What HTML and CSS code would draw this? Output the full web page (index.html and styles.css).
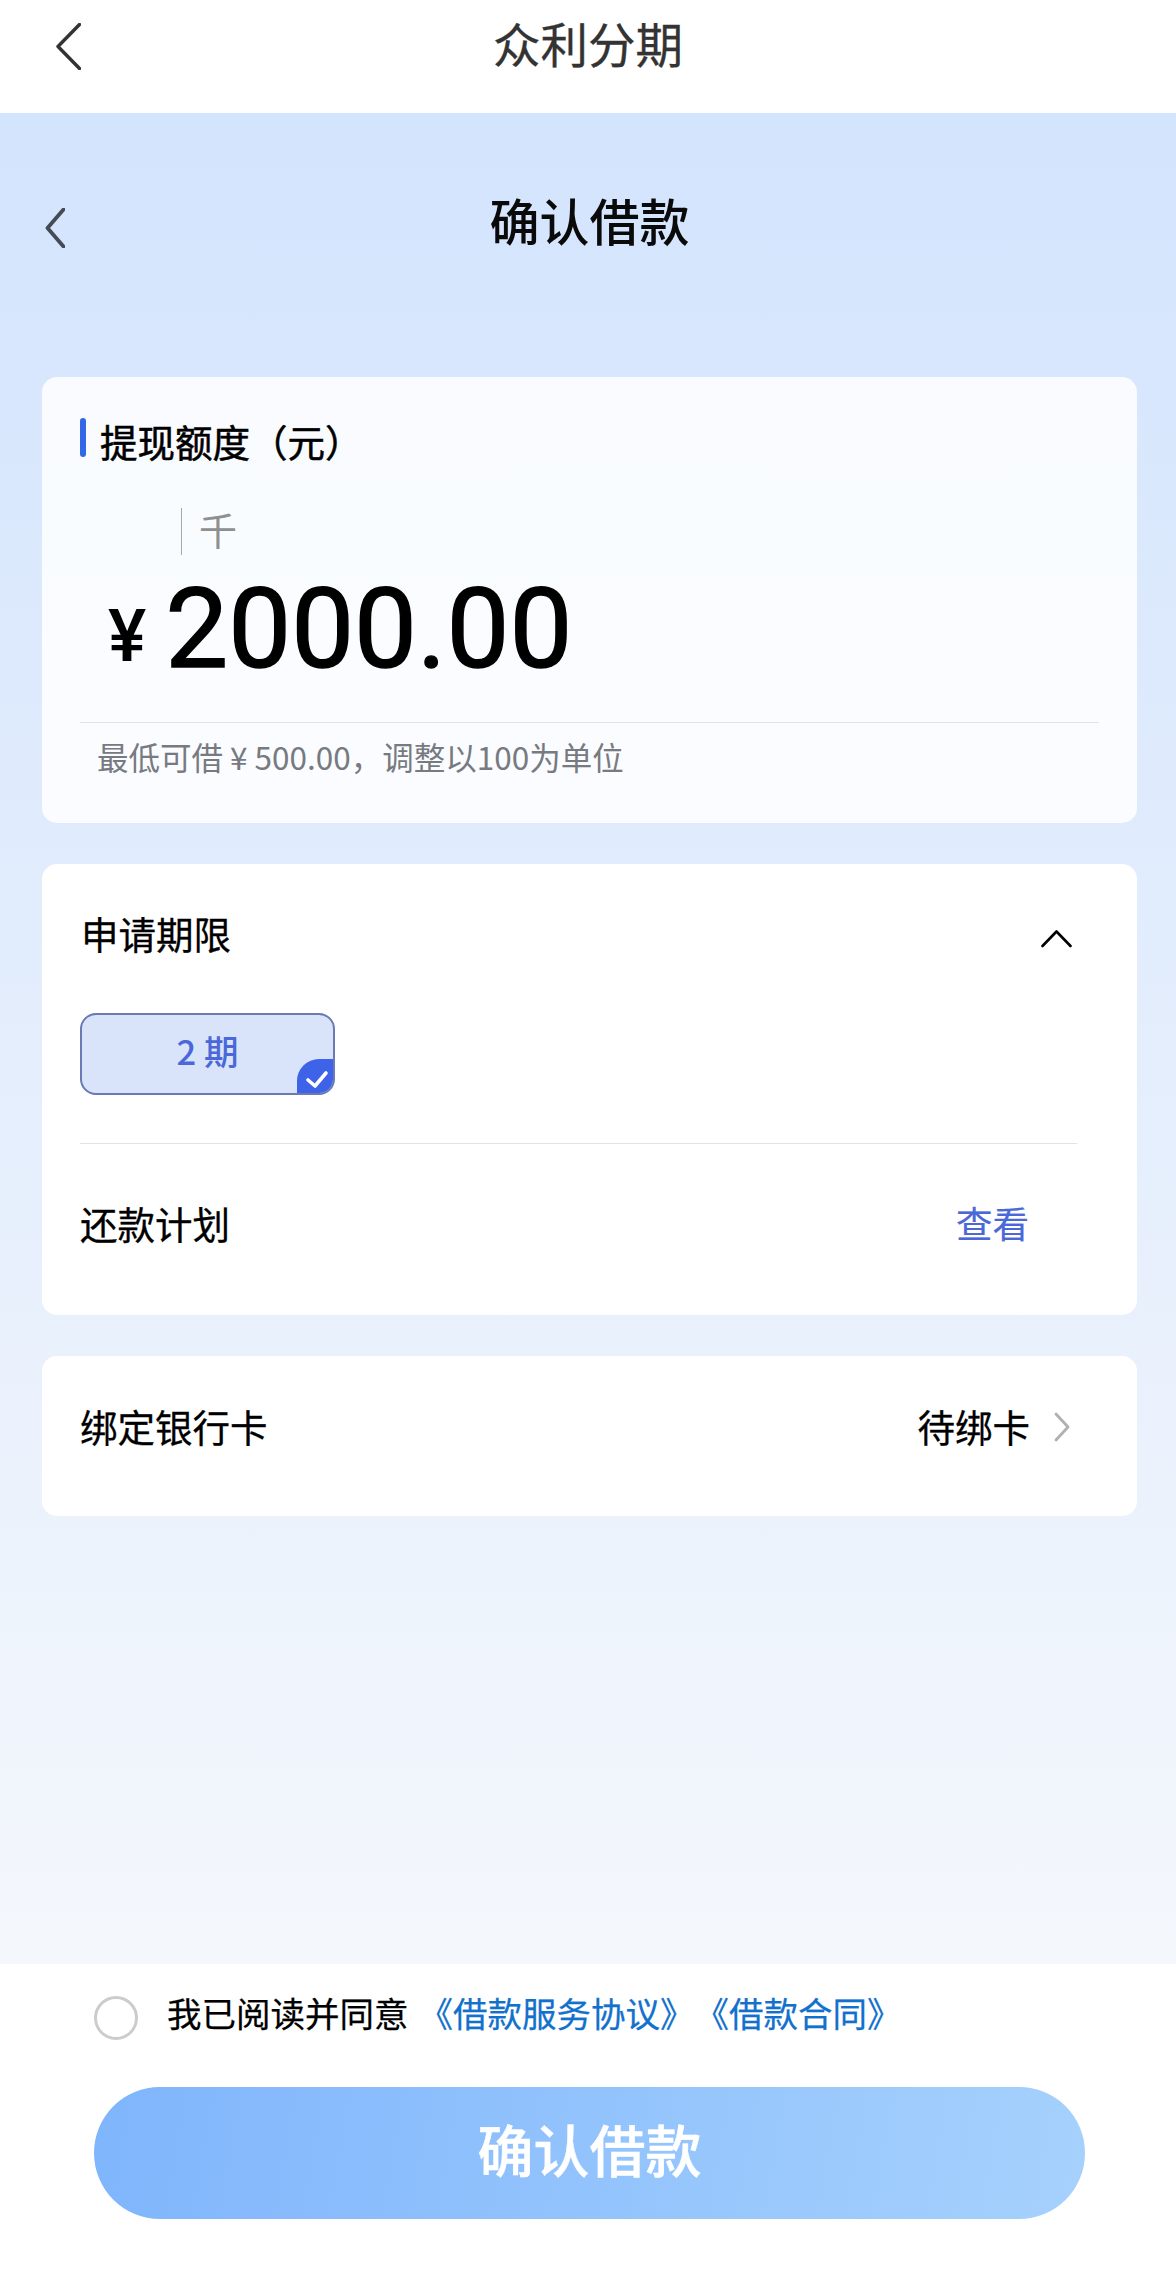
FILE: index.html
```html
<!DOCTYPE html>
<html lang="zh-CN">
<head>
<meta charset="utf-8">
<title>众利分期</title>
<link rel="stylesheet" href="styles.css">
</head>
<body>
<div class="page">
  <header class="topbar">
    <svg class="topbar-back" width="25" height="47" viewBox="0 0 25 47"><path d="M23.5 1.5 2 23.5 23.5 45.5" /></svg>
    <div class="topbar-title">众利分期</div>
    <span></span>
  </header>
  <main class="main">
    <div class="subbar">
      <svg class="subbar-back" width="20" height="40" viewBox="0 0 20 40"><path d="M18.5 1.5 2.5 20 18.5 38.5" /></svg>
      <h1 class="subbar-title">确认借款</h1>
      <span></span>
    </div>
    <section class="card card-amount">
      <div class="amount-head">
        <i class="amount-mark"></i>
        <span class="amount-title">提现额度（元）</span>
      </div>
      <div class="unit-row"><span class="unit">千</span></div>
      <div class="amount-row">
        <span class="currency">¥</span>
        <span class="amount">2000.00</span>
      </div>
      <p class="amount-hint">最低可借 ¥ 500.00，调整以100为单位</p>
    </section>
    <section class="card card-term">
      <div class="term-head">
        <span class="row-label term-label">申请期限</span>
        <svg class="term-toggle" width="31" height="19" viewBox="0 0 31 19"><path d="M1.5 17 15.5 2.5 29.5 17" /></svg>
      </div>
      <div class="chip">
        <span>2 期</span>
        <span class="chip-badge">
          <svg width="38" height="36" viewBox="0 0 38 36"><path d="M11 21 18 27 29 14" /></svg>
        </span>
      </div>
      <div class="plan-row">
        <span class="row-label">还款计划</span>
        <span class="plan-link">查看</span>
      </div>
    </section>
    <section class="card card-bank">
      <span class="row-label">绑定银行卡</span>
      <span class="bank-value">
        <span class="row-label">待绑卡</span>
        <svg class="bank-arrow" width="16" height="30" viewBox="0 0 16 30"><path d="M2 2 14 15 2 28" /></svg>
      </span>
    </section>
  </main>
  <footer class="footer">
    <div class="agree">
      <span class="radio"></span>
      <span class="agree-text">我已阅读并同意</span>
      <span class="agree-link">《借款服务协议》</span>
      <span class="agree-link">《借款合同》</span>
    </div>
    <button class="submit" type="button">确认借款</button>
  </footer>
</div>
</body>
</html>
```
FILE: styles.css
```css
* { box-sizing: border-box; }
html, body { margin: 0; padding: 0; }
body {
  font-family: "Noto Sans CJK SC", "Noto Sans", sans-serif;
  color: #000;
  background: #fff;
}
.page {
  width: 1176px;
  height: 2282px;
  display: flex;
  flex-direction: column;
  overflow: hidden;
}
svg path { fill: none; stroke-linecap: round; stroke-linejoin: round; }

.topbar {
  height: 113px;
  padding: 0 56px 21px;
  display: grid;
  grid-template-columns: 1fr auto 1fr;
  align-items: center;
  background: #fff;
}
.topbar-back path { stroke: #333; stroke-width: 3.4; }
.topbar-title {
  margin-bottom: 6px;
  font-size: 47.5px;
  line-height: 86px;
  color: #333;
  -webkit-text-stroke: 0.3px #333;
}

.main {
  flex: 1;
  padding: 0 39px 0 42px;
  background: linear-gradient(180deg, #d3e4fd 0%, #f4f7fc 100%);
}
.subbar {
  height: 220px;
  margin-bottom: 44px;
  margin-left: 3px;
  display: grid;
  grid-template-columns: 1fr auto 1fr;
  align-items: center;
}
.subbar-back { margin-top: 10px; }
.subbar-back path { stroke: #444b55; stroke-width: 3.8; }
.subbar-title {
  margin: 0 0 8px -3px;
  font-size: 50px;
  line-height: 70px;
  font-weight: 500;
  color: #0a0a0a;
}

.card { border-radius: 15px; background: #fff; }
.row-label {
  font-size: 37.5px;
  line-height: 50px;
  color: #000;
  -webkit-text-stroke: 0.3px #000;
}

.card-amount {
  height: 446px;
  padding: 41px 38px 0;
  background: rgba(255, 255, 255, 0.84);
}
.amount-head { display: flex; gap: 14px; height: 50px; }
.amount-mark { width: 6px; height: 39px; border-radius: 3px; background: #3268e6; }
.amount-title { font-size: 37.5px; line-height: 46px; -webkit-text-stroke: 0.55px #000; }
.unit-row { margin: 40px 0 0 101px; height: 47px; padding-left: 17px; border-left: 1px solid #a8a8a8; }
.unit { display: block; font-size: 38px; line-height: 41px; color: #8f8f8f; }
.amount-row {
  height: 168px;
  padding-left: 28px;
  display: flex;
  gap: 19px;
  border-bottom: 1px solid #dfe3ea;
}
.currency { font-family: Roboto, sans-serif; font-size: 72px; line-height: 66px; margin-top: 49px; font-weight: 500; }
.amount { font-family: Roboto, sans-serif; font-size: 112px; line-height: 148px; font-weight: 400; -webkit-text-stroke: 1.4px #000; }
.amount-hint {
  margin: 0;
  padding: 12px 0 0 17px;
  font-size: 31.5px;
  line-height: 42px;
  color: #777a80;
}

.card-term { height: 451px; margin-top: 41px; padding: 0 60px 0 38px; }
.term-head { height: 149px; display: flex; justify-content: space-between; align-items: flex-start; padding-right: 5px; }
.term-label { margin: 44px 0 0 1px; }
.term-toggle { margin-top: 65px; }
.term-toggle path { stroke: #000; stroke-width: 2.6; }
.chip {
  position: relative;
  width: 255px;
  height: 82px;
  padding-bottom: 8px;
  border: 2px solid #6a7ab5;
  border-radius: 16px;
  background: #d9e3fa;
  overflow: hidden;
  display: flex;
  align-items: center;
  justify-content: center;
  font-size: 34.5px;
  line-height: 50px;
  font-weight: 500;
  color: #4a68d8;
}
.chip-badge {
  position: absolute;
  right: -2px;
  bottom: -2px;
  width: 38px;
  height: 36px;
  border-radius: 22px 0 0 0;
  background: #3f63e8;
  display: flex;
}
.chip-badge path { stroke: #fff; stroke-width: 3.6; }
.plan-row {
  height: 172px;
  margin-top: 48px;
  border-top: 1px solid #e1e3e6;
  display: flex;
  align-items: center;
  justify-content: space-between;
  padding: 0 48px 14px 0;
}
.plan-link { font-size: 36.5px; line-height: 50px; color: #4a68d8; -webkit-text-stroke: 0.2px #4a68d8; }

.card-bank {
  height: 160px;
  margin-top: 41px;
  padding: 0 67px 21px 38px;
  display: flex;
  align-items: center;
  justify-content: space-between;
}
.bank-value { display: flex; align-items: center; gap: 24px; }
.bank-arrow { margin-top: 3px; }
.bank-arrow path { stroke: #b0b0b0; stroke-width: 2.8; }

.footer { height: 318px; padding: 32px 91px 0 94px; background: #fff; }
.agree { display: flex; align-items: flex-start; height: 44px; }
.radio { width: 44px; height: 44px; border-radius: 50%; border: 3px solid #cccccc; margin-right: 29px; }
.agree-text, .agree-link { font-size: 34.5px; line-height: 32px; -webkit-text-stroke: 0.25px currentColor; }
.agree-link { color: #1271cc; }
.agree-text { margin-right: 10px; }
.submit {
  display: block;
  width: 991px;
  height: 132px;
  margin-top: 47px;
  padding: 0 0 12px;
  border: 0;
  border-radius: 66px;
  background: linear-gradient(100deg, #7fb5fc 0%, #a6d1fd 100%);
  font-family: inherit;
  font-size: 56px;
  font-weight: 500;
  color: #fff;
  -webkit-text-stroke: 0.5px #fff;
}
```
